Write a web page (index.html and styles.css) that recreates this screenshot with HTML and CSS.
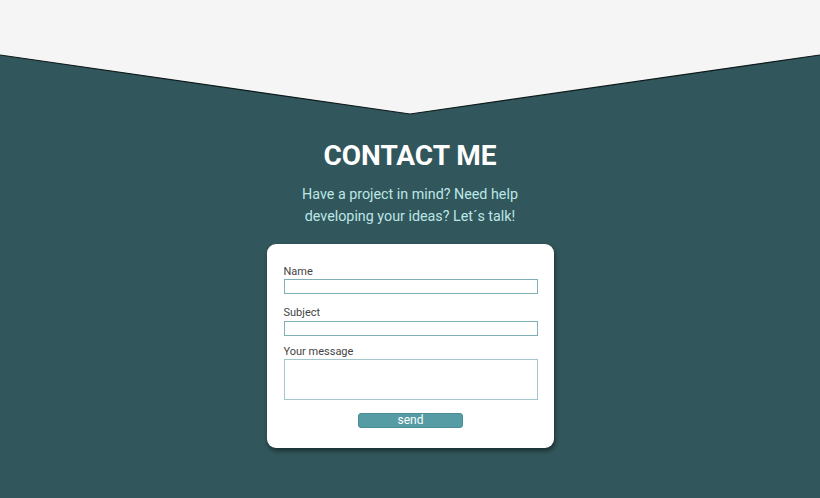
FILE: index.html
```
<!DOCTYPE html>
<html>
<head>
<meta charset="utf-8">
<link rel="stylesheet" href="styles.css">
</head>
<body>
<div class="top">
  <svg width="820" height="116" viewBox="0 0 820 116">
    <polygon points="0,0 820,0 820,55 410,114 0,55" fill="#f5f5f5"/>
    <polyline points="0,55 410,114 820,55" fill="none" stroke="#0d1a1b" stroke-width="1.2"/>
  </svg>
</div>
<main class="contact">
  <h1 class="title">CONTACT ME</h1>
  <p class="lead">Have a project in mind? Need help<br>developing your ideas? Let´s talk!</p>
  <form class="card">
    <label class="label">Name</label>
    <input class="field field-name" type="text">
    <label class="label">Subject</label>
    <input class="field field-subject" type="text">
    <label class="label">Your message</label>
    <textarea class="field area"></textarea>
    <div class="actions"><button class="send" type="button">send</button></div>
  </form>
</main>
</body>
</html>
```
FILE: styles.css
```
html, body {
  margin: 0;
  padding: 0;
}
body {
  background: #31565b;
  font-family: Roboto, "Liberation Sans", sans-serif;
  width: 820px;
  height: 498px;
  overflow: hidden;
}
.top {
  height: 115px;
  overflow: hidden;
}
.top svg {
  display: block;
}
.contact {
  display: flex;
  flex-direction: column;
  align-items: center;
}
.title {
  margin: 24px 0 0;
  font-size: 28px;
  line-height: 34px;
  font-weight: 700;
  color: #ffffff;
}
.lead {
  margin: 10px 0 0;
  font-size: 14.3px;
  line-height: 22px;
  color: #bde6e6;
  text-align: center;
}
.card {
  margin-top: 17px;
  width: 287px;
  box-sizing: border-box;
  background: #ffffff;
  border-radius: 9px;
  box-shadow: 1px 3px 4px rgba(0, 0, 0, 0.45);
  padding: 22px 16px 20px 17px;
  display: flex;
  flex-direction: column;
}
.label {
  font-size: 11px;
  line-height: 12px;
  color: #444;
}
.field {
  display: block;
  box-sizing: border-box;
  width: 254px;
  height: 15px;
  border: 1px solid #7fb0b6;
  padding: 0;
  background: #fff;
}
.field-name {
  margin: 1px 0 13px;
}
.field-subject {
  margin: 2px 0 10px;
}
.area {
  height: 41px;
  margin: 1px 0 13px;
  resize: none;
  border-color: #a2c8cd;
}
.actions {
  display: flex;
  justify-content: center;
}
.send {
  width: 105px;
  height: 15px;
  padding: 0;
  border: 1px solid #4a8d95;
  border-radius: 3px;
  background: #559ca4;
  color: #ffffff;
  font-family: Roboto, "Liberation Sans", sans-serif;
  font-size: 12px;
  line-height: 13px;
}
```
